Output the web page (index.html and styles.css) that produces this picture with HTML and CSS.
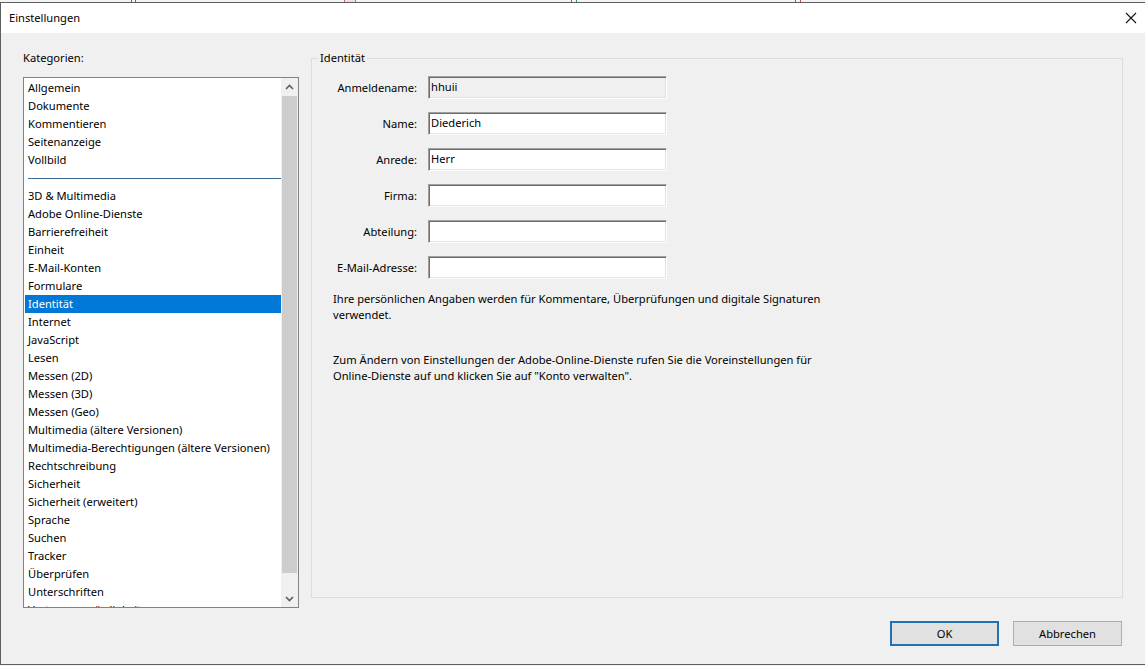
FILE: index.html
```html
<!DOCTYPE html>
<html lang="de">
<head>
<meta charset="utf-8">
<title>Einstellungen</title>
<link rel="stylesheet" href="styles.css">
</head>
<body>
<div class="behind">
  <span class="mark m1"></span>
  <span class="mark m2"></span>
  <span class="mark m3"></span>
  <span class="mark m4"></span>
</div>
<div class="window">
  <div class="titlebar">
    <span class="title">Einstellungen</span>
    <svg class="close" width="12" height="12" viewBox="0 0 12 12"><path d="M1 1 L11 11 M11 1 L1 11" stroke="#111" stroke-width="1.1" fill="none"/></svg>
  </div>
  <div class="content">
    <div class="main">
      <div class="left">
        <div class="caption">Kategorien:</div>
        <div class="listbox">
          <ul class="items">
            <li>Allgemein</li>
            <li>Dokumente</li>
            <li>Kommentieren</li>
            <li>Seitenanzeige</li>
            <li>Vollbild</li>
            <li class="sep"></li>
            <li>3D &amp; Multimedia</li>
            <li>Adobe Online-Dienste</li>
            <li>Barrierefreiheit</li>
            <li>Einheit</li>
            <li>E-Mail-Konten</li>
            <li>Formulare</li>
            <li class="selected">Identität</li>
            <li>Internet</li>
            <li>JavaScript</li>
            <li>Lesen</li>
            <li>Messen (2D)</li>
            <li>Messen (3D)</li>
            <li>Messen (Geo)</li>
            <li>Multimedia (ältere Versionen)</li>
            <li>Multimedia-Berechtigungen (ältere Versionen)</li>
            <li>Rechtschreibung</li>
            <li>Sicherheit</li>
            <li>Sicherheit (erweitert)</li>
            <li>Sprache</li>
            <li>Suchen</li>
            <li>Tracker</li>
            <li>Überprüfen</li>
            <li>Unterschriften</li>
            <li>Vertrauenswürdigkeitsmanager</li>
          </ul>
          <div class="scrollbar">
            <div class="sb-btn up"><svg width="9" height="6" viewBox="0 0 9 6"><path d="M1 5 L4.5 1.5 L8 5" stroke="#606060" stroke-width="1.7" fill="none"/></svg></div>
            <div class="thumb"></div>
            <div class="sb-rest"></div>
            <div class="sb-btn down"><svg width="9" height="6" viewBox="0 0 9 6"><path d="M1 1 L4.5 4.5 L8 1" stroke="#606060" stroke-width="1.7" fill="none"/></svg></div>
          </div>
        </div>
      </div>
      <fieldset class="group">
        <legend class="legend">Identität</legend>
        <div class="group-body">
          <div class="form">
            <label class="lbl">Anmeldename:</label>
            <div class="field disabled">hhuii</div>
            <label class="lbl">Name:</label>
            <div class="field">Diederich</div>
            <label class="lbl">Anrede:</label>
            <div class="field">Herr</div>
            <label class="lbl">Firma:</label>
            <div class="field"></div>
            <label class="lbl">Abteilung:</label>
            <div class="field"></div>
            <label class="lbl">E-Mail-Adresse:</label>
            <div class="field"></div>
          </div>
          <p class="note first">Ihre persönlichen Angaben werden für Kommentare, Überprüfungen und digitale Signaturen<br>verwendet.</p>
          <p class="note second">Zum Ändern von Einstellungen der Adobe-Online-Dienste rufen Sie die Voreinstellungen für<br>Online-Dienste auf und klicken Sie auf "Konto verwalten".</p>
        </div>
      </fieldset>
    </div>
    <div class="buttons">
      <div class="btn default">OK</div>
      <div class="btn">Abbrechen</div>
    </div>
  </div>
</div>
</body>
</html>
```
FILE: styles.css
```css
* { box-sizing: border-box; }
html, body { margin: 0; padding: 0; }
body {
  width: 1145px;
  height: 666px;
  overflow: hidden;
  background: #f4f4f4;
  font-family: "Noto Sans", "Liberation Sans", sans-serif;
  font-size: 11.15px;
  color: #000;
}
.behind {
  height: 2px;
  display: flex;
  align-items: flex-end;
  overflow: hidden;
}
.mark {
  display: block;
  height: 2px;
  border-left: 1px solid;
  border-right: 1px solid;
}
.m1 { margin-left: 131px; width: 5px; border-color: #7a4fc9; }
.m2 { margin-left: 208px; width: 12px; border-color: #c9658f; background: #f2dbe6; }
.m3 { margin-left: 215px; width: 6px; border-color: #2e8b7e; }
.m4 { margin-left: 218px; width: 6px; border-color: #d04a3a; }
.window {
  height: 663px;
  border-top: 1px solid #5f5f5f;
  border-left: 1px solid #5f5f5f;
  border-bottom: 1px solid #5f5f5f;
  display: flex;
  flex-direction: column;
}
.titlebar {
  height: 30px;
  background: #fff;
  display: flex;
  align-items: center;
  justify-content: space-between;
  padding: 0 8px 0 8px;
}
.title { line-height: 16px; }
.close { margin-top: -1px; }
.content {
  flex: 1;
  background: #f0f0f0;
  padding: 17px 22px 0 22px;
}
.main {
  display: flex;
  align-items: flex-start;
  gap: 12px;
}
.left { width: 276px; }
.caption { line-height: 16px; height: 16px; margin-bottom: 11px; }
.listbox {
  height: 531px;
  border: 1px solid #828282;
  background: #fff;
  display: flex;
}
.items {
  list-style: none;
  margin: 0;
  padding: 1px 0 0 0;
  flex: 1;
  overflow: hidden;
}
.items li {
  height: 18px;
  line-height: 18px;
  margin-left: 1px;
  padding-left: 3px;
  white-space: nowrap;
}
.items li.selected { background: #0078d7; color: #fff; }
.items li.sep { position: relative; }
.items li.sep::after {
  content: "";
  position: absolute;
  left: 3px;
  right: 0;
  top: 9px;
  height: 1px;
  background: #3a6a94;
}
.scrollbar {
  width: 17px;
  background: #f0f0f0;
  display: flex;
  flex-direction: column;
}
.sb-btn {
  height: 17px;
  display: flex;
  align-items: center;
  justify-content: center;
}
.sb-btn.up { height: 18px; }
.thumb { height: 477px; margin: 0 1px; background: #cdcdcd; }
.sb-rest { flex: 1; }
.group {
  flex: 1;
  margin: 0;
  padding: 0;
  height: 548px;
  border: 1px solid #dcdcdc;
  min-width: 0;
}
.legend {
  margin-left: 6px;
  padding: 0 2px;
  line-height: 16px;
}
.group-body { padding: 10px 0 0 10px; }
.form {
  display: grid;
  grid-template-columns: 95px 239px;
  column-gap: 11px;
  row-gap: 13px;
  align-items: center;
}
.lbl { text-align: right; line-height: 16px; }
.field {
  height: 23px;
  background: #fff;
  border-style: solid;
  border-width: 1px;
  border-color: #a0a0a0 #ffffff #ffffff #a0a0a0;
  box-shadow: inset 1px 1px 0 #6d6d6d, inset -1px -1px 0 #e3e3e3;
  padding: 0 0 0 2px;
  line-height: 20px;
}
.field.disabled { background: #f0f0f0; }
.note {
  margin: 0 0 0 11px;
  line-height: 16px;
  white-space: nowrap;
}
.note.first { margin-top: 12px; }
.note.second { margin-top: 29px; }
.buttons {
  display: flex;
  justify-content: flex-end;
  gap: 14px;
  margin-top: 13px;
  padding-right: 1px;
}
.btn {
  width: 109px;
  height: 25px;
  background: #e1e1e1;
  border: 1px solid #adadad;
  display: flex;
  align-items: center;
  justify-content: center;
  line-height: 16px;
}
.btn.default { border: 2px solid #2370b5; }
```
